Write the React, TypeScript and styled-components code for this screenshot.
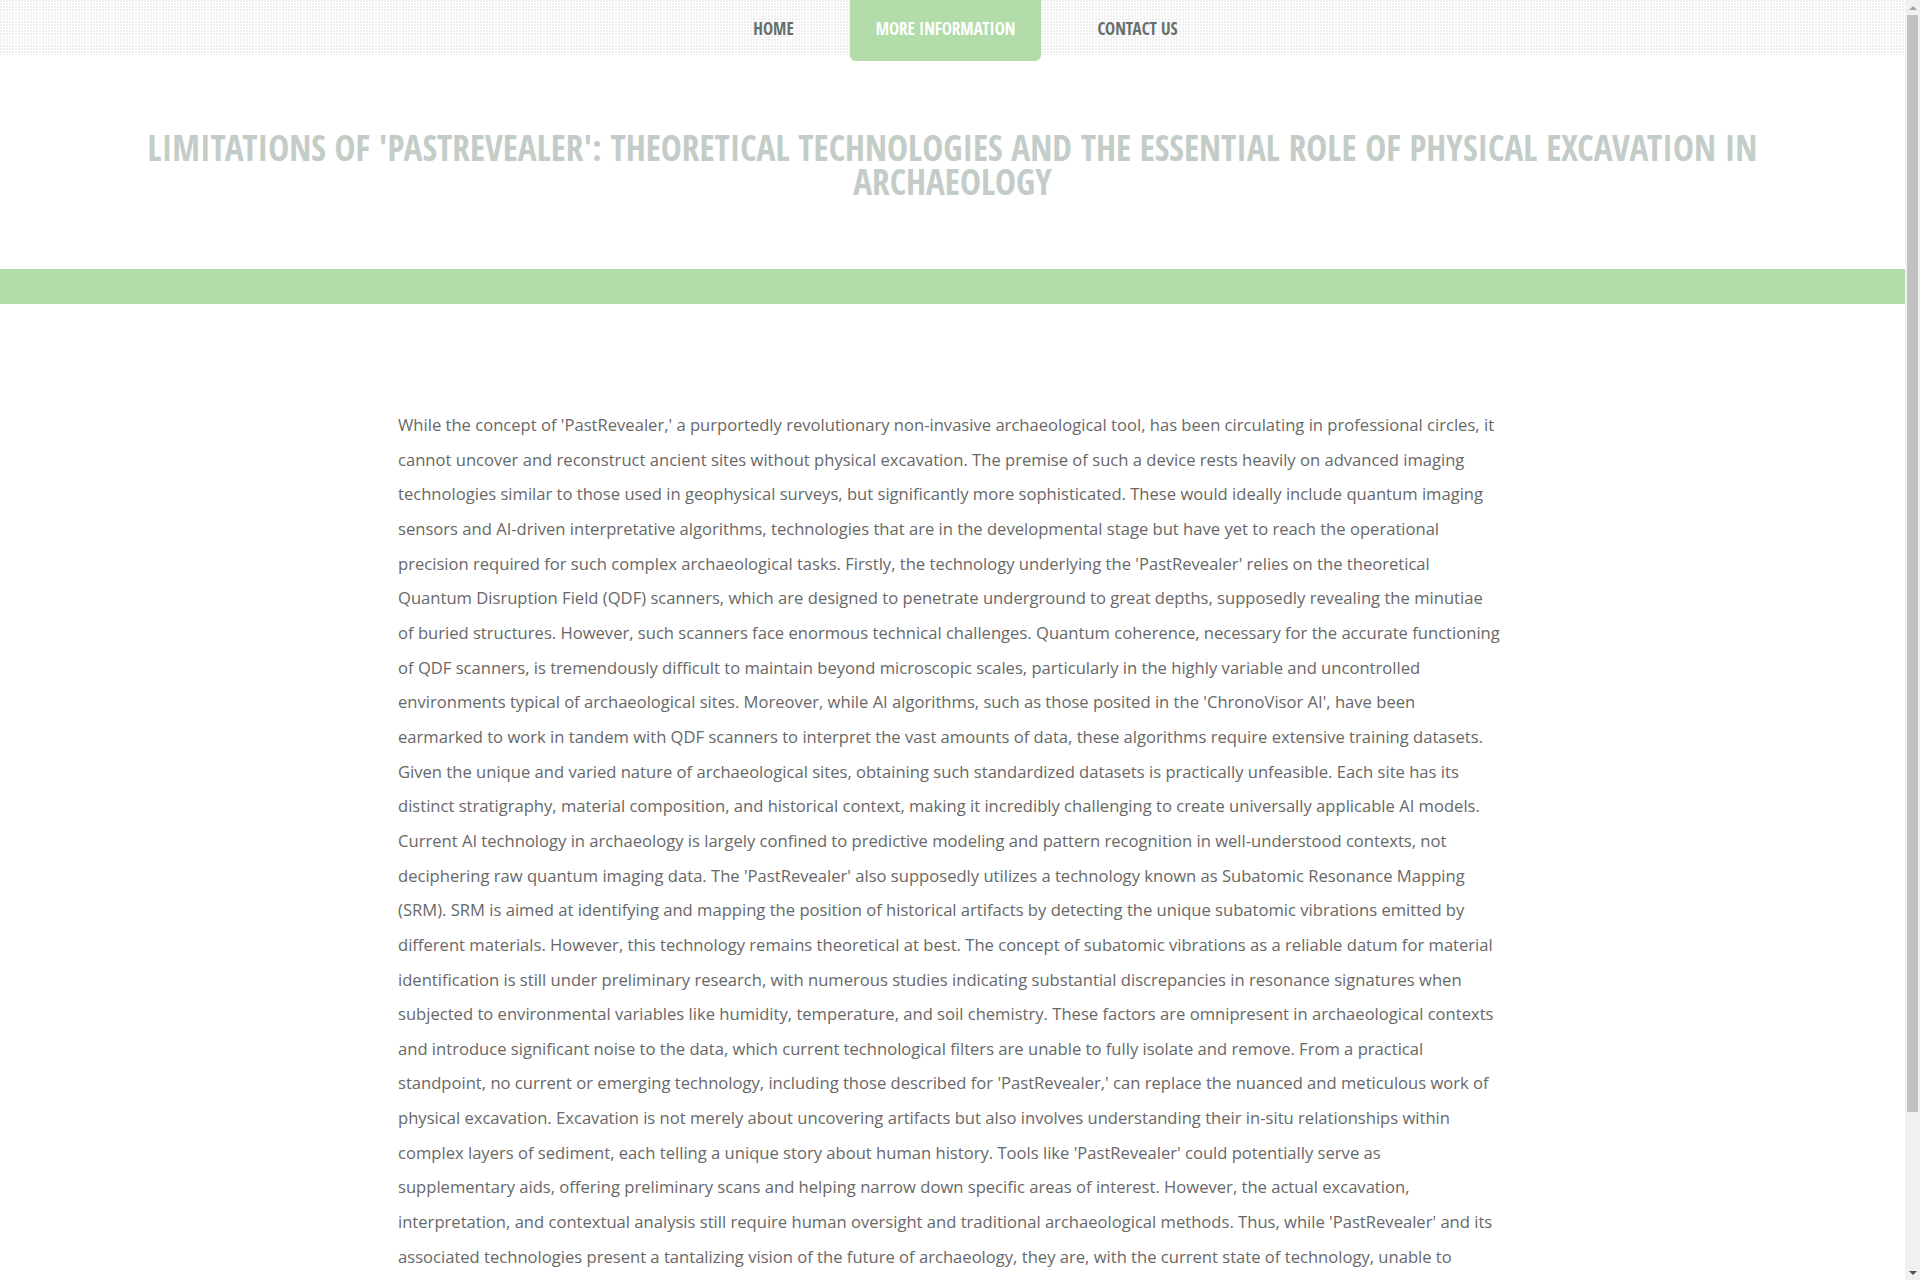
import React from "react";
import styled, { createGlobalStyle } from "styled-components";

const GlobalStyle = createGlobalStyle`
  html, body {
    margin: 0;
    padding: 0;
    background: #ffffff;
  }
  body {
    font-family: "Open Sans", "Liberation Sans", sans-serif;
  }
  * { box-sizing: border-box; }
`;

const Page = styled.div`
  margin-right: 15px;
`;

const Header = styled.header`
  height: 55px;
  background-color: #ffffff;
  background-image:
    linear-gradient(to right, rgba(255,255,255,0) 2px, #ffffff 2px),
    linear-gradient(to bottom, #efefef 2px, #ffffff 2px);
  background-size: 3px 3px;
  display: flex;
  justify-content: center;
  padding-left: 26px;
`;

const Nav = styled.nav`
  display: flex;
  align-items: flex-start;
  gap: 30px;
`;

const NavItem = styled.a<{ $active?: boolean }>`
  display: block;
  height: ${(p) => (p.$active ? "61px" : "55px")};
  padding: 18px 26px 0;
  font-family: "Open Sans Condensed", "Open Sans", "Liberation Sans Narrow", sans-serif;
  font-stretch: 75%;
  font-weight: 700;
  font-size: 17px;
  line-height: 22px;
  text-transform: uppercase;
  text-decoration: none;
  white-space: nowrap;
  color: ${(p) => (p.$active ? "#ffffff" : "#66706b")};
  background: ${(p) => (p.$active ? "#b2dcaa" : "transparent")};
  border-radius: 0 0 6px 6px;
  position: relative;
  z-index: 1;
`;

const TitleSection = styled.section`
  padding: 75px 130px 71px;
  display: flex;
  justify-content: center;
`;

const Title = styled.h1`
  margin: 0;
  text-align: center;
  font-family: "Open Sans Condensed", "Open Sans", "Liberation Sans Narrow", sans-serif;
  font-stretch: 75%;
  font-weight: 700;
  font-size: 35.3px;
  line-height: 34px;
  color: #c3ccc6;
  text-transform: uppercase;
`;

const Band = styled.div`
  height: 35px;
  background: #b2dcaa;
`;

const Content = styled.main`
  max-width: 1109px;
  margin: 0 auto;
  padding: 104px 6px 150px 0;
`;

const Paragraph = styled.p`
  margin: 0;
  font-family: "Open Sans", "Liberation Sans", sans-serif;
  font-size: 16.6px;
  line-height: 34.65px;
  color: #686868;
`;

/* Browser-style scrollbar drawn over the right edge of the window */
const Scrollbar = styled.div`
  position: fixed;
  top: 0;
  right: 0;
  bottom: 0;
  width: 15px;
  background: #f1f1f1;
  display: flex;
  flex-direction: column;
  z-index: 10;
`;

const ArrowButton = styled.div<{ $down?: boolean }>`
  height: 15px;
  flex: none;
  display: flex;
  align-items: center;
  justify-content: center;
  &::after {
    content: "";
    width: 0;
    height: 0;
    border-left: 4px solid transparent;
    border-right: 4px solid transparent;
    ${(p) =>
      p.$down
        ? "border-top: 4px solid #505050;"
        : "border-bottom: 4px solid #a3a3a3;"}
  }
`;

const Track = styled.div`
  flex: 1;
  padding: 0 2px;
`;

const Thumb = styled.div`
  height: 1097px;
  background: #c1c1c1;
`;

const text =
  "While the concept of 'PastRevealer,' a purportedly revolutionary non-invasive archaeological tool, has been circulating in professional circles, it cannot uncover and reconstruct ancient sites without physical excavation. The premise of such a device rests heavily on advanced imaging technologies similar to those used in geophysical surveys, but significantly more sophisticated. These would ideally include quantum imaging sensors and AI-driven interpretative algorithms, technologies that are in the developmental stage but have yet to reach the operational precision required for such complex archaeological tasks. Firstly, the technology underlying the 'PastRevealer' relies on the theoretical Quantum Disruption Field (QDF) scanners, which are designed to penetrate underground to great depths, supposedly revealing the minutiae of buried structures. However, such scanners face enormous technical challenges. Quantum coherence, necessary for the accurate functioning of QDF scanners, is tremendously difficult to maintain beyond microscopic scales, particularly in the highly variable and uncontrolled environments typical of archaeological sites. Moreover, while AI algorithms, such as those posited in the 'ChronoVisor AI', have been earmarked to work in tandem with QDF scanners to interpret the vast amounts of data, these algorithms require extensive training datasets. Given the unique and varied nature of archaeological sites, obtaining such standardized datasets is practically unfeasible. Each site has its distinct stratigraphy, material composition, and historical context, making it incredibly challenging to create universally applicable AI models. Current AI technology in archaeology is largely confined to predictive modeling and pattern recognition in well-understood contexts, not deciphering raw quantum imaging data. The 'PastRevealer' also supposedly utilizes a technology known as Subatomic Resonance Mapping (SRM). SRM is aimed at identifying and mapping the position of historical artifacts by detecting the unique subatomic vibrations emitted by different materials. However, this technology remains theoretical at best. The concept of subatomic vibrations as a reliable datum for material identification is still under preliminary research, with numerous studies indicating substantial discrepancies in resonance signatures when subjected to environmental variables like humidity, temperature, and soil chemistry. These factors are omnipresent in archaeological contexts and introduce significant noise to the data, which current technological filters are unable to fully isolate and remove. From a practical standpoint, no current or emerging technology, including those described for 'PastRevealer,' can replace the nuanced and meticulous work of physical excavation. Excavation is not merely about uncovering artifacts but also involves understanding their in-situ relationships within complex layers of sediment, each telling a unique story about human history. Tools like 'PastRevealer' could potentially serve as supplementary aids, offering preliminary scans and helping narrow down specific areas of interest. However, the actual excavation, interpretation, and contextual analysis still require human oversight and traditional archaeological methods. Thus, while 'PastRevealer' and its associated technologies present a tantalizing vision of the future of archaeology, they are, with the current state of technology, unable to replace the essential role of physical excavation.";

export default function App() {
  return (
    <>
      <GlobalStyle />
      <Page>
        <Header>
          <Nav>
            <NavItem href="#">Home</NavItem>
            <NavItem href="#" $active>More Information</NavItem>
            <NavItem href="#">Contact Us</NavItem>
          </Nav>
        </Header>
        <TitleSection>
          <Title>
            Limitations of 'PastRevealer': Theoretical Technologies and the Essential Role of Physical Excavation in Archaeology
          </Title>
        </TitleSection>
        <Band />
        <Content>
          <Paragraph>{text}</Paragraph>
        </Content>
      </Page>
      <Scrollbar aria-hidden="true">
        <ArrowButton />
        <Track>
          <Thumb />
        </Track>
        <ArrowButton $down />
      </Scrollbar>
    </>
  );
}
